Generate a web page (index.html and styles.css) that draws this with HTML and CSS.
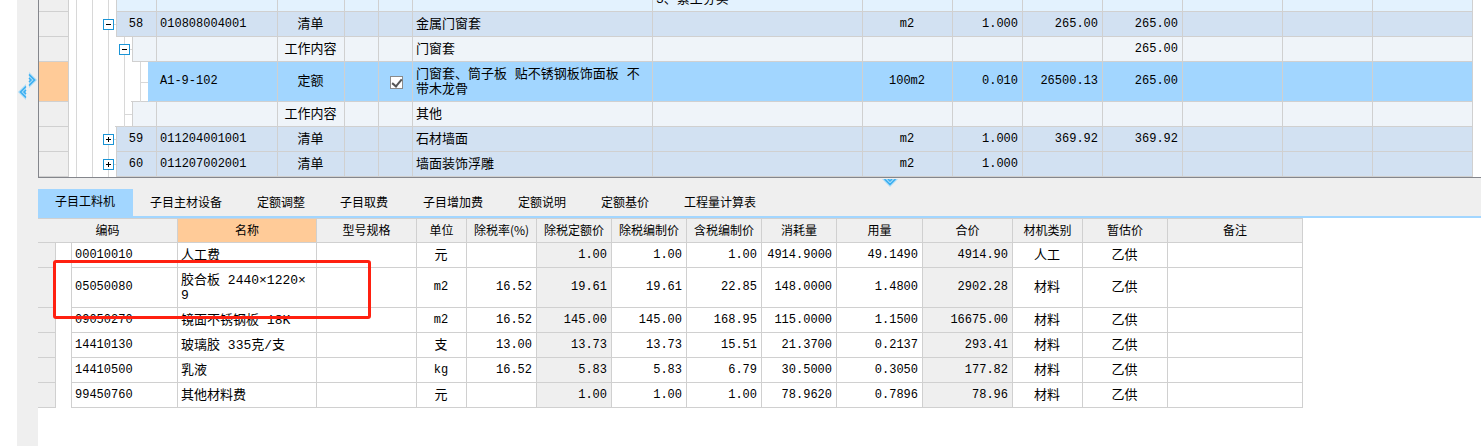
FILE: index.html
```html
<!DOCTYPE html>
<html lang="zh-CN">
<head>
<meta charset="utf-8">
<title>子目工料机</title>
<link rel="stylesheet" href="styles.css">
</head>
<body>
<div class="app">
<aside class="splitter">
<svg class="split-icon" width="19" height="28" viewBox="0 0 19 28" aria-hidden="true">
<path d="M11 0L19 8L11 16Z" fill="#a9dcf8"/><path d="M11 2.500l5.500 5.500-5.500 5.500M11 6l2 2-2 2" fill="none" stroke="#3aaef0" stroke-width="1.500"/>
<path d="M8 12L0 20L8 28Z" fill="#a9dcf8"/><path d="M8 14.500l-5.500 5.500 5.500 5.500M8 18l-2 2 2 2" fill="none" stroke="#3aaef0" stroke-width="1.500"/>
</svg>
</aside>
<main class="main">
<section class="bill">
<table class="grid bill-grid">
<colgroup><col class="w30"><col class="w48"><col class="w16"><col class="w16"><col class="w8"><col class="w121"><col class="w67"><col class="w34"><col class="w34"><col class="w240"><col class="w210"><col class="w90"><col class="w70"><col class="w80"><col class="w80"><col class="w100"><col class="w90"><col></colgroup>
<tbody>
<tr class="partial"><td class="gutter"></td><td class="tree"><div class="guides"><i></i><i></i><i></i></div></td><td colspan="3"></td><td></td><td></td><td></td><td></td><td></td><td><div class="tail">3、素土夯实</div></td><td></td><td></td><td></td><td></td><td></td><td></td><td></td></tr>
<tr class="item"><td class="gutter"></td><td class="tree"><div class="guides"><i></i><i></i><i class="node"><button class="toggle" aria-label="折叠"></button></i></div></td><td colspan="3" class="c">58</td><td>010808004001</td><td class="c zh">清单</td><td></td><td></td><td class="zh">金属门窗套</td><td></td><td class="c">m2</td><td class="r">1.000</td><td class="r">265.00</td><td class="r">265.00</td><td></td><td></td><td></td></tr>
<tr class="work"><td class="gutter"></td><td class="tree" colspan="2"><div class="guides"><i></i><i></i><i></i><i class="node"><button class="toggle" aria-label="折叠"></button></i></div></td><td colspan="2"></td><td></td><td class="c zh">工作内容</td><td></td><td></td><td class="zh">门窗套</td><td></td><td></td><td></td><td></td><td class="r">265.00</td><td></td><td></td><td></td></tr>
<tr class="quota"><td class="gutter"></td><td class="tree close" colspan="3"><div class="guides"><i></i><i></i><i></i><i></i><i class="node"></i></div></td><td colspan="2" class="deep">A1-9-102</td><td class="c zh">定额</td><td></td><td class="c check"><input type="checkbox" checked aria-label="选用"></td><td class="zh">门窗套、筒子板 贴不锈钢板饰面板 不<br>带木龙骨</td><td></td><td class="c">100m2</td><td class="r">0.010</td><td class="r">26500.13</td><td class="r">265.00</td><td></td><td></td><td></td></tr>
<tr class="work"><td class="gutter"></td><td class="tree close" colspan="2"><div class="guides"><i></i><i></i><i></i><i class="node"></i></div></td><td colspan="2"></td><td></td><td class="c zh">工作内容</td><td></td><td></td><td class="zh">其他</td><td></td><td></td><td></td><td></td><td></td><td></td><td></td><td></td></tr>
<tr class="item"><td class="gutter"></td><td class="tree"><div class="guides"><i></i><i></i><i class="node"><button class="toggle plus" aria-label="展开"></button></i></div></td><td colspan="3" class="c">59</td><td>011204001001</td><td class="c zh">清单</td><td></td><td></td><td class="zh">石材墙面</td><td></td><td class="c">m2</td><td class="r">1.000</td><td class="r">369.92</td><td class="r">369.92</td><td></td><td></td><td></td></tr>
<tr class="item"><td class="gutter"></td><td class="tree"><div class="guides"><i></i><i></i><i class="node"><button class="toggle plus" aria-label="展开"></button></i></div></td><td colspan="3" class="c">60</td><td>011207002001</td><td class="c zh">清单</td><td></td><td></td><td class="zh">墙面装饰浮雕</td><td></td><td class="c">m2</td><td class="r">1.000</td><td></td><td></td><td></td><td></td><td></td></tr>
</tbody>
</table>
</section>
<div class="divider">
<svg width="16" height="8" viewBox="0 0 16 8" aria-hidden="true"><path d="M0 0H16L8 8Z" fill="#a9dcf8"/><path d="M2.500 0l5.500 5.500 5.500-5.500M6 0l2 2 2-2" fill="none" stroke="#3aaef0" stroke-width="1.500"/></svg>
</div>
<nav class="tabs">
<button class="tab active">子目工料机</button><button class="tab">子目主材设备</button><button class="tab">定额调整</button><button class="tab">子目取费</button><button class="tab">子目增加费</button><button class="tab">定额说明</button><button class="tab">定额基价</button><button class="tab">工程量计算表</button>
</nav>
<section class="detail">
<table class="grid detail-grid">
<colgroup><col class="w18"><col class="w16"><col class="w106"><col class="w139"><col class="w100"><col class="w50"><col class="w70"><col class="w75"><col class="w75"><col class="w75"><col class="w75"><col class="w86"><col class="w90"><col class="w70"><col class="w85"><col class="w135"></colgroup>
<thead><tr><th colspan="3" class="code">编码</th><th class="current">名称</th><th>型号规格</th><th>单位</th><th>除税率(%)</th><th>除税定额价</th><th>除税编制价</th><th>含税编制价</th><th>消耗量</th><th>用量</th><th>合价</th><th>材机类别</th><th>暂估价</th><th>备注</th></tr></thead>
<tbody>
<tr><td class="gutter"></td><td class="indent"></td><td>00010010</td><td class="zh">人工费</td><td></td><td class="c zh">元</td><td></td><td class="r calc">1.00</td><td class="r">1.00</td><td class="r">1.00</td><td class="r">4914.9000</td><td class="r">49.1490</td><td class="r calc">4914.90</td><td class="c zh">人工</td><td class="c zh">乙供</td><td></td></tr>
<tr class="tall"><td class="gutter"></td><td class="indent"></td><td>05050080</td><td class="zh">胶合板 2440×1220×<br>9</td><td></td><td class="c">m2</td><td class="r">16.52</td><td class="r calc">19.61</td><td class="r">19.61</td><td class="r">22.85</td><td class="r">148.0000</td><td class="r">1.4800</td><td class="r calc">2902.28</td><td class="c zh">材料</td><td class="c zh">乙供</td><td></td></tr>
<tr><td class="gutter"></td><td class="indent"></td><td>09050270</td><td class="zh">镜面不锈钢板 18K</td><td></td><td class="c">m2</td><td class="r">16.52</td><td class="r calc">145.00</td><td class="r">145.00</td><td class="r">168.95</td><td class="r">115.0000</td><td class="r">1.1500</td><td class="r calc">16675.00</td><td class="c zh">材料</td><td class="c zh">乙供</td><td></td></tr>
<tr><td class="gutter"></td><td class="indent"></td><td>14410130</td><td class="zh">玻璃胶 335克/支</td><td></td><td class="c zh">支</td><td class="r">13.00</td><td class="r calc">13.73</td><td class="r">13.73</td><td class="r">15.51</td><td class="r">21.3700</td><td class="r">0.2137</td><td class="r calc">293.41</td><td class="c zh">材料</td><td class="c zh">乙供</td><td></td></tr>
<tr><td class="gutter"></td><td class="indent"></td><td>14410500</td><td class="zh">乳液</td><td></td><td class="c">kg</td><td class="r">16.52</td><td class="r calc">5.83</td><td class="r">5.83</td><td class="r">6.79</td><td class="r">30.5000</td><td class="r">0.3050</td><td class="r calc">177.82</td><td class="c zh">材料</td><td class="c zh">乙供</td><td></td></tr>
<tr><td class="gutter"></td><td class="indent"></td><td>99450760</td><td class="zh">其他材料费</td><td></td><td class="c zh">元</td><td></td><td class="r calc">1.00</td><td class="r">1.00</td><td class="r">1.00</td><td class="r">78.9620</td><td class="r">0.7896</td><td class="r calc">78.96</td><td class="c zh">材料</td><td class="c zh">乙供</td><td></td></tr>
</tbody>
</table>
<div class="highlight"></div>
</section>
</main>
</div>
</body>
</html>
```
FILE: styles.css
```css
* { box-sizing: border-box; }
body { margin: 0; background: #fff; color: #000; font-family: "Liberation Mono", "Noto Sans CJK SC", monospace; font-size: 12px; line-height: 15px; overflow: hidden; }
button { font: inherit; color: inherit; border: 0; padding: 0; background: none; }
.app { display: flex; min-height: 100vh; padding-left: 17px; }
.splitter { flex: 0 0 21px; background: #efefef; padding: 72px 0 0 1px; }
.split-icon { display: block; }
.main { flex: 1; min-width: 0; }

.grid { table-layout: fixed; border-collapse: separate; border-spacing: 0; }
.grid td, .grid th { height: 25px; padding: 0 4px 0 3px; border-right: 1px solid #d0d0d0; border-bottom: 1px solid #d0d0d0; text-align: left; vertical-align: middle; white-space: nowrap; }
.grid .c { text-align: center; }
.grid .r { text-align: right; }
.grid .zh { font-size: 13px; }
.grid .gutter { background: #efefef; }

.bill { border-left: 1px solid #84868c; border-bottom: 1px solid #84868c; }
.bill-grid { width: calc(100% - 8px); }
.bill-grid .partial td { height: 12px; background: #e3f2fe; }
.tail { height: 11px; display: flex; align-items: flex-end; overflow: hidden; font-size: 13px; padding-bottom: 4px; }
.item td { background: #d2e1f2; }
.work td { background: #eff4f9; }
.quota td { height: 40px; background: #a2d6ff; }
.quota .gutter { background: #ffcb98; }
.quota .deep { padding-left: 11px; }
.bill-grid .partial .gutter, .item .gutter, .work .gutter { background: #efefef; }
.bill-grid td.tree { padding: 0 0 0 7px; background: #fff; border-bottom: 0; height: 1px; }
.bill-grid .quota .tree { border-right-color: #a2d6ff; }
.bill-grid td.close { background: linear-gradient(#d0d0d0, #d0d0d0) right bottom / 17px 1px no-repeat #fff; }
.guides { display: flex; height: 25px; }
.partial .guides { height: 12px; }
.quota .guides { height: 40px; }
.guides i { flex: 0 0 16px; border-left: 1px solid #d8d8d8; }
.guides .node { flex: 0 0 8px; display: flex; align-items: center; background: linear-gradient(#d8d8d8, #d8d8d8) center / 100% 1px no-repeat; }
.toggle { flex: 0 0 11px; height: 11px; margin-left: -6px; border: 1px solid #1a94d6; background: linear-gradient(#000, #000) center / 5px 1px no-repeat #fff; }
.toggle.plus { background: linear-gradient(#000, #000) center / 5px 1px no-repeat, linear-gradient(#000, #000) center / 1px 5px no-repeat, #fff; }
.grid .check { padding: 2px 0 0 2px; }
.check input { appearance: none; display: block; width: 13px; height: 13px; margin: 0 auto; border: 1px solid #8a8a8a; background: #fff; position: relative; }
.check input::after { content: ""; position: absolute; left: 3px; top: 0; width: 4px; height: 8px; border: solid #555; border-width: 0 2px 2px 0; transform: rotate(40deg); }

.divider { height: 11px; padding: 1px 0 0 58.5%; background: #efefef; }
.divider svg { display: block; }
.tabs { display: flex; height: 29px; background: #efefef; border-bottom: 2px solid #a2d6ff; font-family: "Noto Sans CJK SC", sans-serif; }
.tab { padding: 0 18px 2px 17px; white-space: nowrap; }
.tab.active { background: #a2d6ff; padding-bottom: 4px; }

.detail { position: relative; }
.detail-grid { width: 1265px; }
.grid th { border-top: 1px solid #d0d0d0; background: #efefef; font-family: "Noto Sans CJK SC", sans-serif; font-weight: 400; padding: 0 0 2px; text-align: center; }
.grid th.current { background: #ffcb98; }
.detail-grid .tall td { height: 40px; }
.detail-grid .indent { border-bottom: 0; padding: 0; }
.detail-grid .calc { background: #efefef; }
.highlight { position: absolute; left: 15px; top: 42px; width: 318px; height: 59px; border: 3px solid #ff2010; border-radius: 3px; }

.w8 { width: 8px; }
.w16 { width: 16px; }
.w18 { width: 18px; }
.w30 { width: 30px; }
.w34 { width: 34px; }
.w48 { width: 48px; }
.w50 { width: 50px; }
.w67 { width: 67px; }
.w70 { width: 70px; }
.w75 { width: 75px; }
.w80 { width: 80px; }
.w85 { width: 85px; }
.w86 { width: 86px; }
.w90 { width: 90px; }
.w100 { width: 100px; }
.w106 { width: 106px; }
.w121 { width: 121px; }
.w135 { width: 135px; }
.w139 { width: 139px; }
.w210 { width: 210px; }
.w240 { width: 240px; }
```
